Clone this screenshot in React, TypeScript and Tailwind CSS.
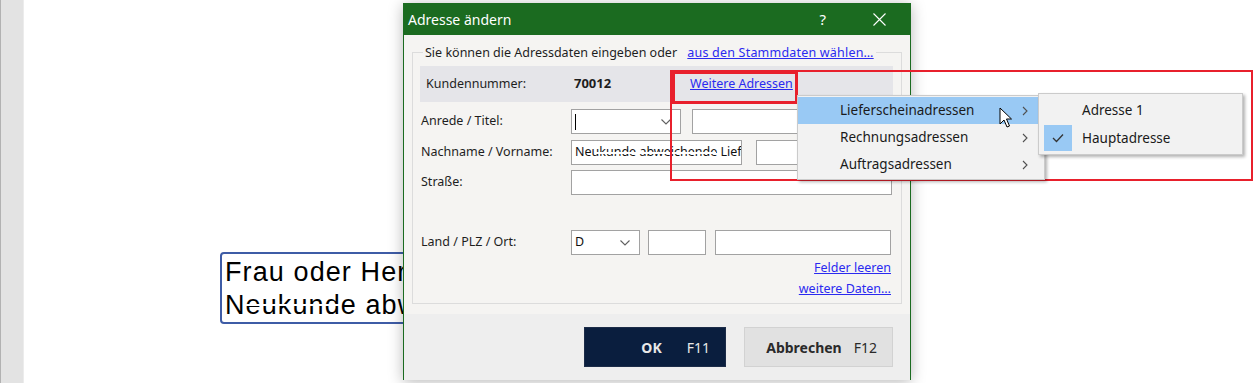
import React from "react"

const font = "font-['Noto_Sans',sans-serif]"

function Chevron() {
    return (
        <svg width="10" height="6" viewBox="0 0 10 6" className="shrink-0">
            <path d="M0.5 0.5 L5 5 L9.5 0.5" fill="none" stroke="#606060" strokeWidth="1.1" />
        </svg>
    )
}

function Input({ className = "", children }: { className?: string; children?: React.ReactNode }) {
    return (
        <div className={`relative flex h-[25px] items-center overflow-hidden border border-[#a2a2a2] bg-white px-[3px] text-[12.5px] text-[#111] ${className}`}>
            {children}
        </div>
    )
}

function Label({ children }: { children: React.ReactNode }) {
    return <div className="w-[151px] shrink-0 pl-[1px] text-[12.5px] text-[#1e1e1e]">{children}</div>
}

function MenuItem({ label, active = false }: { label: string; active?: boolean }) {
    return (
        <div className={`flex h-[27px] items-center pl-[42px] pr-[16px] ${active ? "bg-[#99c9f4]" : ""}`}>
            <span className="flex-1">{label}</span>
            <svg width="6" height="10" viewBox="0 0 6 10">
                <path d="M1 1 L5 5 L1 9" fill="none" stroke="#505050" strokeWidth="1.1" />
            </svg>
        </div>
    )
}

export default function App() {
    return (
        <div className={`relative flex h-[383px] w-[1257px] overflow-hidden bg-white ${font}`}>
            {/* left strip */}
            <div className="h-full w-[24px] border-l border-r border-l-[#b2b2b2] border-r-[#ececec] bg-[#e3e3e3]" />
            <div className="flex-1" />

            {/* text field on the page */}
            <div className="absolute left-[220px] top-[252px] h-[72px] w-[300px] overflow-hidden whitespace-nowrap rounded-[4px] border-2 border-[#3e5ca6] pl-[3px] pt-[2px] font-['Liberation_Sans',sans-serif] text-[27px] leading-[33px] tracking-[1.1px] text-black">
                <div>Frau oder Herr</div>
                <div className="relative">
                    Neukunde abweichend
                    <div className="absolute left-[20px] top-[15px] h-[2px] w-[95px] bg-white" />
                </div>
            </div>

            {/* dialog */}
            <div className="absolute left-[403px] top-[3px] flex h-[377px] w-[508px] flex-col border-x border-[#1b6b20] bg-[#f5f4f2] shadow-[0_2px_14px_rgba(0,0,0,0.28)]">
                <div className="flex h-[32px] shrink-0 items-center bg-[#1b6b20] pl-[4px] text-[14px] text-white">
                    <span className="flex-1">Adresse ändern</span>
                    <span className="mr-[47px] text-[15px]">?</span>
                    <svg width="13" height="13" viewBox="0 0 13 13" className="mr-[24px]">
                        <path d="M0.5 0.5 L12.5 12.5 M12.5 0.5 L0.5 12.5" stroke="white" strokeWidth="1.1" />
                    </svg>
                </div>

                <div className="flex-1 px-[8px] pt-[9px]">
                    <fieldset className="h-[260px] border border-[#dcdcdc] pl-[7px] pr-[8px]">
                        <legend className="ml-[3px] px-[2px] text-[12.5px] leading-[17px] text-[#1e1e1e]">
                            Sie können die Adressdaten eingeben oder <span className="ml-[7px] tracking-[0.2px] text-[#2a2af0] underline">aus den Stammdaten wählen…</span>
                        </legend>
                        <div className="mt-[5px] flex h-[36px] items-center bg-[#e5e5e9] text-[12.5px] text-[#1e1e1e]">
                            <span className="w-[154px] pl-[6px]">Kundennummer:</span>
                            <span className="w-[116px] text-[13px] font-bold">70012</span>
                            <span className="text-[#2a2af0] underline">Weitere Adressen</span>
                        </div>

                        <div className="mt-[7px] flex items-center">
                            <Label>Anrede / Titel:</Label>
                            <Input className="w-[110px] border-[#3c8ee2]">
                                <span className="h-[16px] w-[1px] bg-black" />
                                <span className="flex-1" />
                                <span className="mr-[6px]"><Chevron /></span>
                            </Input>
                            <Input className="ml-[11px] w-[200px]" />
                        </div>
                        <div className="mt-[6px] flex items-center">
                            <Label>Nachname / Vorname:</Label>
                            <Input className="w-[171px]">
                                <span className="whitespace-nowrap">Neukunde abweichende Lieferadresse</span>
                                <div className="absolute left-[24px] top-[11px] h-[2px] w-[120px] bg-white" />
                            </Input>
                            <Input className="ml-[14px] w-[136px]" />
                        </div>
                        <div className="mt-[5px] flex items-center">
                            <Label>Straße:</Label>
                            <Input className="w-[321px]" />
                        </div>
                        <div className="mt-[35px] flex items-center">
                            <Label>Land / PLZ / Ort:</Label>
                            <Input className="w-[69px]">
                                <span className="flex-1">D</span>
                                <span className="mr-[6px]"><Chevron /></span>
                            </Input>
                            <Input className="ml-[8px] w-[58px]" />
                            <Input className="ml-[9px] w-[176px]" />
                        </div>
                        <div className="mt-[2px] flex flex-col items-end pr-[2px] text-[12.5px] leading-[21px] text-[#2a2af0] underline">
                            <span>Felder leeren</span>
                            <span>weitere Daten…</span>
                        </div>
                    </fieldset>
                </div>

                <div className="flex h-[66px] shrink-0 items-center justify-end gap-[18px] bg-[#eeeeee] pr-[17px] text-[14px]">
                    <div className="flex h-[40px] w-[142px] items-center justify-end border border-[#1c2c48] bg-[#0a1e3e] pr-[15px] text-[#e8e8e8]">
                        <span className="font-bold">OK</span>
                        <span className="ml-[25px]">F11</span>
                    </div>
                    <div className="flex h-[40px] w-[149px] items-center justify-end border border-[#d2d2d2] bg-[#e1e1e1] pr-[15px] text-[#2a2a2a]">
                        <span className="font-bold">Abbrechen</span>
                        <span className="ml-[12px]">F12</span>
                    </div>
                </div>
            </div>

            {/* red highlight boxes */}
            <div className="absolute left-[670px] top-[70px] h-[111px] w-[583px] border-2 border-[#e8202c]" />
            <div className="absolute left-[672px] top-[71px] h-[33px] w-[126px] border-[3px] border-[#e8202c]" />

            {/* context menu */}
            <div className="absolute left-[797px] top-[95px] w-[248px] border border-[#cbcbcb] bg-[#f2f2f2] py-[1px] text-[13.5px] text-[#1a1a1a] shadow-[2px_2px_3px_rgba(0,0,0,0.3)]">
                <MenuItem label="Lieferscheinadressen" active />
                <MenuItem label="Rechnungsadressen" />
                <MenuItem label="Auftragsadressen" />
            </div>

            {/* submenu */}
            <div className="absolute left-[1038px] top-[93px] w-[205px] border border-[#cbcbcb] bg-[#f2f2f2] px-[5px] pb-[2px] pt-[3px] text-[13.5px] text-[#1a1a1a] shadow-[2px_2px_3px_rgba(0,0,0,0.3)]">
                <div className="flex h-[27px] items-center">
                    <span className="w-[28px]" />
                    <span className="ml-[10px]">Adresse 1</span>
                </div>
                <div className="flex h-[28px] items-center">
                    <span className="flex h-[26px] w-[28px] items-center justify-center bg-[#99c9f4]">
                        <svg width="12" height="10" viewBox="0 0 12 10">
                            <path d="M1 5 L4.5 8.5 L11 1.5" fill="none" stroke="#333" strokeWidth="1.3" />
                        </svg>
                    </span>
                    <span className="ml-[10px]">Hauptadresse</span>
                </div>
            </div>

            {/* mouse cursor */}
            <svg width="14" height="22" viewBox="0 0 14 22" className="absolute left-[999px] top-[107px]">
                <path d="M1 1 L1 17 L5 13 L8 20 L10.5 19 L7.5 12 L12.5 12 Z" fill="white" stroke="black" strokeWidth="1" strokeLinejoin="round" />
            </svg>
        </div>
    )
}
